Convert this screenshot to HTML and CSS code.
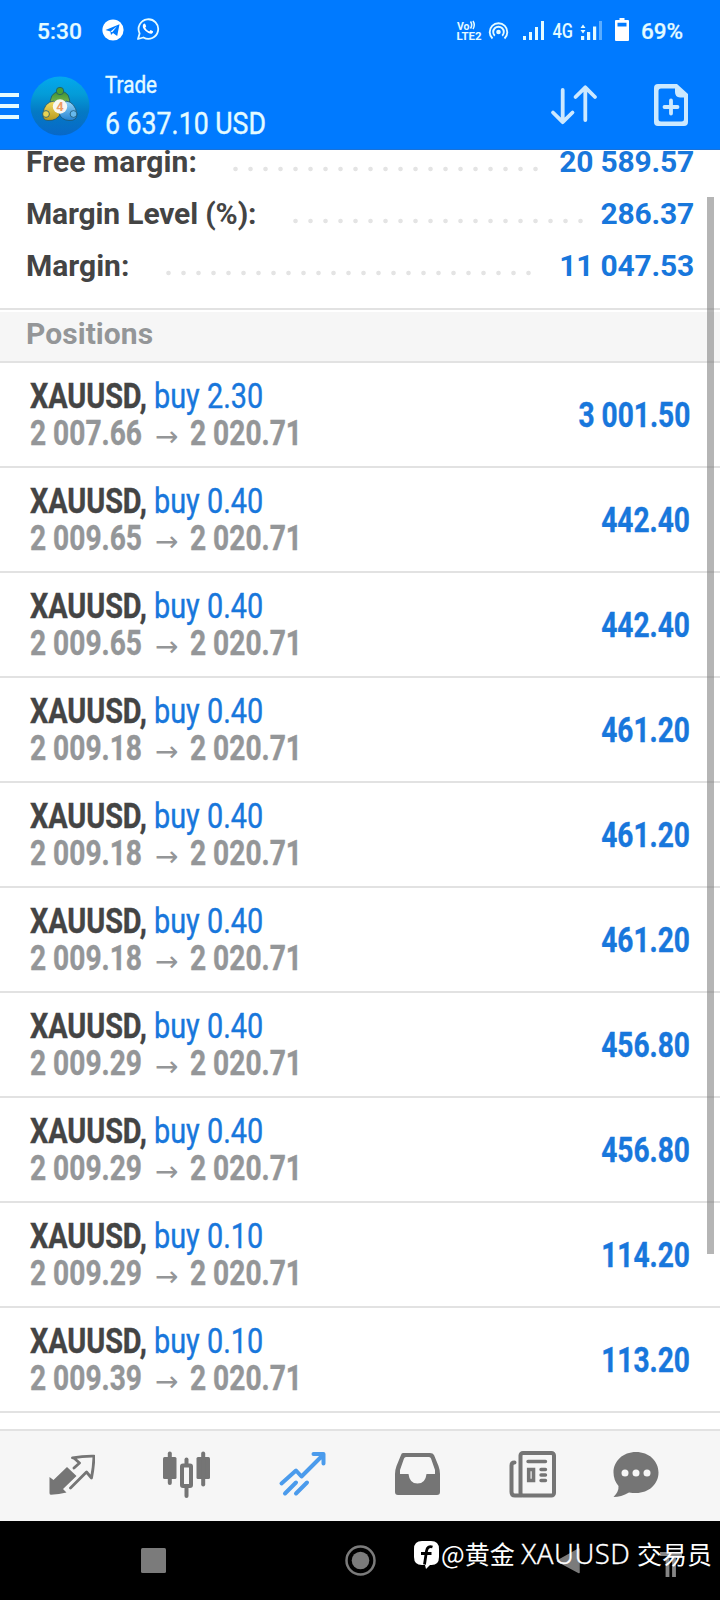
FILE: index.html
```
<!DOCTYPE html>
<html lang="en">
<head>
<meta charset="utf-8">
<title>Trade</title>
<link rel="stylesheet" href="styles.css">
</head>
<body>
<div class="screen">
  <header class="header">
    <div class="status">
      <span class="clock">5:30</span>
      <svg class="telegram" width="22" height="22" viewBox="0 0 22 22"><circle cx="11" cy="11" r="10.6" fill="#fff"/><path d="M3.5 11 17.5 5.2 15.2 17 11 14 9 16 8.4 12.5Z" fill="#007aff"/><path d="M8.6 12.4 15 7.3 10.2 13.2" fill="#fff"/></svg>
      <svg class="whatsapp" width="24" height="24" viewBox="0 0 24 24"><path d="M2 22 3.6 16.4A9.8 9.8 0 1 1 7.4 20.5Z" fill="none" stroke="#e4fbff" stroke-width="1.8" stroke-linejoin="round"/><path d="M7.3 7.2Q8.5 5.8 9.2 7L10.2 9.2 9.2 10.7Q10.5 13.3 13.3 14.5L14.6 13.1 17 14.3Q17.6 15 16 16.5 13.4 17.5 9.6 14.1 5.5 10 7.3 7.2Z" fill="#fff"/></svg>
      <svg class="indicators" width="146" height="26" viewBox="456 17 146 26" fill="#e4fbff" font-family="Roboto, sans-serif">
        <text x="457" y="28.500" font-size="11" font-weight="700" textLength="12.500" lengthAdjust="spacingAndGlyphs">Vo</text>
        <path d="M470.500 20.500q2.400 3.500 0 7M473 20q2.500 4 0 8" fill="none" stroke="#e4fbff" stroke-width="1.500"/>
        <text x="456.500" y="39" font-size="11" font-weight="700" textLength="25" lengthAdjust="spacingAndGlyphs">LTE2</text>
        <circle cx="498.500" cy="31" r="2.300"/>
        <path d="M492.500 37.500A8.800 8.800 0 1 1 504.500 37.500M494.800 34.800A5.300 5.300 0 1 1 502.200 34.800" fill="none" stroke="#e4fbff" stroke-width="1.900"/>
        <path d="M523 35h3v4h-3zM529 31h3v8h-3zM535 26h3v13h-3zM541 20h3v19h-3z"/>
        <text x="552.500" y="36.500" font-size="20" font-weight="500" textLength="20.500" lengthAdjust="spacingAndGlyphs">4G</text>
        <path d="M580.500 27 583 23.500 585.500 27ZM580.500 29 583 32.500 585.500 29ZM581 35h3.200v4H581zM587 31h3.200v8H587zM593 25.500h3.200V39H593z"/>
        <path d="M599 20h3v19h-3z" opacity=".4"/>
      </svg>
      <svg class="battery" width="14" height="24" viewBox="0 0 14 24"><path fill="#fff" fill-rule="evenodd" d="M4.500 0h5v2H13q1 0 1 1v19q0 1-1 1H1q-1 0-1-1V3q0-1 1-1h3.500ZM2.500 4.700v3.800h9V4.700Z"/></svg>
      <span class="percent">69%</span>
    </div>
    <div class="toolbar">
      <span class="menu"><i></i><i></i><i></i></span>
      <svg class="logo" width="60" height="60" viewBox="0 0 60 60">
        <defs>
          <linearGradient id="sky" x1="0" y1="0" x2="0" y2="1"><stop offset="0" stop-color="#03a9ee"/><stop offset=".3" stop-color="#049cd8"/><stop offset=".6" stop-color="#0479c4"/><stop offset="1" stop-color="#0868c8"/></linearGradient>
          <linearGradient id="gr" x1="0" y1="0" x2="0" y2="1"><stop offset="0" stop-color="#3c8f32"/><stop offset="1" stop-color="#9ed15f"/></linearGradient>
          <linearGradient id="ye" x1="0" y1="0" x2="0" y2="1"><stop offset="0" stop-color="#f1dc62"/><stop offset="1" stop-color="#b99a1c"/></linearGradient>
          <linearGradient id="bl" x1="0" y1="0" x2="0" y2="1"><stop offset="0" stop-color="#94d6fa"/><stop offset="1" stop-color="#2583d2"/></linearGradient>
        </defs>
        <circle cx="30" cy="30" r="29.500" fill="url(#sky)"/>
        <g stroke="#1c5570" stroke-width=".8">
          <path d="M20.500 31Q18.500 16 30 15.500T39.500 31Q34 35 30 34 24 34 20.500 31Z" fill="url(#gr)"/>
          <path d="M13 38Q14 26 24 25L31 37Q27 45 18 44.500 12 44 13 38Z" fill="url(#ye)"/>
          <path d="M36 25Q45 26 47 38 47 45 39 44.500 31 44 29 37Z" fill="url(#bl)"/>
          <circle cx="30" cy="15" r="3.700" fill="#4ca033"/><circle cx="16" cy="38" r="3.400" fill="#ead353"/><circle cx="43.500" cy="38" r="3.400" fill="#66b9ed"/>
        </g>
        <circle cx="30" cy="30.500" r="7.200" fill="#f7f7f2"/>
        <text x="30" y="34.800" text-anchor="middle" font-family="Roboto, sans-serif" font-size="13" font-weight="700" fill="#ee9c62">4</text>
      </svg>
      <div class="account"><div class="title">Trade</div><div class="balance">6 637.10 USD</div></div>
      <svg class="sort" width="48" height="42" viewBox="0 0 48 42" fill="none" stroke="#cce9ff" stroke-width="3.800" stroke-linecap="round" stroke-linejoin="round"><path d="M12.700 6V38M3 28.500 12.700 38.200 22.500 28.500M35.300 36V3.500M25.500 13 35.300 3.300 45 13"/></svg>
      <svg class="add" width="34" height="42" viewBox="0 0 34 42"><path fill="#cce9ff" fill-rule="evenodd" d="M4 0H23L34 10V38Q34 42 30 42H4Q0 42 0 38V4Q0 0 4 0ZM7 4.500Q4.500 4.500 4.500 7V35Q4.500 37.500 7 37.500H27.500Q30 37.500 30 35V13.500H26Q21 13 21 8V4.500Z"/><path d="M10.500 23h13M17 16.500v13" stroke="#cce9ff" stroke-width="3.800" stroke-linecap="round"/></svg>
    </div>
  </header>

  <main class="content">
    <section class="summary">
      <div class="line"><span class="label label-free">Free margin:</span><span class="dots dots-free"></span><span class="sum">20 589.57</span></div>
      <div class="line"><span class="label label-level">Margin Level (%):</span><span class="dots dots-level"></span><span class="sum">286.37</span></div>
      <div class="line"><span class="label label-margin">Margin:</span><span class="dots dots-margin"></span><span class="sum">11 047.53</span></div>
    </section>
    <h2 class="section-title">Positions</h2>
    <section class="positions">
      <div class="row"><div class="info"><div class="deal"><b>XAUUSD,</b> buy 2.30</div><div class="prices"><span class="open">2 007.66</span><span class="arrow">→</span><span class="now">2 020.71</span></div></div><span class="profit">3 001.50</span></div>
      <div class="row"><div class="info"><div class="deal"><b>XAUUSD,</b> buy 0.40</div><div class="prices"><span class="open">2 009.65</span><span class="arrow">→</span><span class="now">2 020.71</span></div></div><span class="profit">442.40</span></div>
      <div class="row"><div class="info"><div class="deal"><b>XAUUSD,</b> buy 0.40</div><div class="prices"><span class="open">2 009.65</span><span class="arrow">→</span><span class="now">2 020.71</span></div></div><span class="profit">442.40</span></div>
      <div class="row"><div class="info"><div class="deal"><b>XAUUSD,</b> buy 0.40</div><div class="prices"><span class="open">2 009.18</span><span class="arrow">→</span><span class="now">2 020.71</span></div></div><span class="profit">461.20</span></div>
      <div class="row"><div class="info"><div class="deal"><b>XAUUSD,</b> buy 0.40</div><div class="prices"><span class="open">2 009.18</span><span class="arrow">→</span><span class="now">2 020.71</span></div></div><span class="profit">461.20</span></div>
      <div class="row"><div class="info"><div class="deal"><b>XAUUSD,</b> buy 0.40</div><div class="prices"><span class="open">2 009.18</span><span class="arrow">→</span><span class="now">2 020.71</span></div></div><span class="profit">461.20</span></div>
      <div class="row"><div class="info"><div class="deal"><b>XAUUSD,</b> buy 0.40</div><div class="prices"><span class="open">2 009.29</span><span class="arrow">→</span><span class="now">2 020.71</span></div></div><span class="profit">456.80</span></div>
      <div class="row"><div class="info"><div class="deal"><b>XAUUSD,</b> buy 0.40</div><div class="prices"><span class="open">2 009.29</span><span class="arrow">→</span><span class="now">2 020.71</span></div></div><span class="profit">456.80</span></div>
      <div class="row"><div class="info"><div class="deal"><b>XAUUSD,</b> buy 0.10</div><div class="prices"><span class="open">2 009.29</span><span class="arrow">→</span><span class="now">2 020.71</span></div></div><span class="profit">114.20</span></div>
      <div class="row"><div class="info"><div class="deal"><b>XAUUSD,</b> buy 0.10</div><div class="prices"><span class="open">2 009.39</span><span class="arrow">→</span><span class="now">2 020.71</span></div></div><span class="profit">113.20</span></div>
    </section>
    <div class="scrollbar"></div>
  </main>

  <nav class="tabs">
    <svg width="48" height="48" viewBox="0 0 48 48"><path fill="#757575" d="M2.500 26 6.500 29 20 16 29.500 25 16 38 19.500 41.500Q12 43.500 4 43.800 2.500 44 2.500 42Z"/><path d="M27 17 32.500 12 27.500 7.500 25.500 6.800Q36 5 47 5.200 46.500 17 44.500 27L39.500 21 23.500 37" fill="none" stroke="#f6f6f6" stroke-width="6"/><path d="M27 17 32.500 12 27.500 7.500 25.500 6.800Q36 5 47 5.200 46.500 17 44.500 27L39.500 21 23.500 37" fill="none" stroke="#757575" stroke-width="2.800" stroke-linejoin="round" stroke-linecap="round"/></svg>
    <svg width="48" height="48" viewBox="-1 0 48 48" fill="#757575"><rect y="6" x="0" width="13.500" height="22" rx="1.500"/><rect x="4.800" y="0.500" width="4" height="33.500" rx="2"/><rect x="33.500" y="6" width="13.500" height="22" rx="1.500"/><rect x="38.200" y="0.500" width="4" height="35" rx="2"/><rect x="21.500" y="6.500" width="4" height="8" rx="2"/><rect x="21.500" y="34" width="4" height="13" rx="2"/><rect x="19" y="14.500" width="9" height="20.500" rx="1" fill="none" stroke="#757575" stroke-width="4"/></svg>
    <svg width="48" height="48" viewBox="0 0 48 48" fill="none" stroke="#4b9bec" stroke-width="4" stroke-linecap="round" stroke-linejoin="round"><path d="M3.500 32.500 18 19.500 23.500 25.500 45 4M35.500 3H45.500V12.500M7 42.500 18 31.500M18 42.500 29 31.500"/></svg>
    <svg width="48" height="48" viewBox="0 0 48 48"><path fill="#757575" fill-rule="evenodd" d="M10 2H37Q40 2 41 4L45.500 15Q47 19 47 23V41Q47 44 44 44H5Q2 44 2 41V23Q2 19 3.500 15L8 4Q8.500 2 10 2ZM13 6Q11.500 6 11 7.500L7 19V23H15.500Q16.500 32.500 24.500 32.500T33.500 23H42V19L38 7.500Q37.500 6 36 6Z"/></svg>
    <svg width="48" height="48" viewBox="0 0 48 48" fill="none" stroke="#757575" stroke-width="4" stroke-linecap="round" stroke-linejoin="round"><rect x="12.500" y="2" width="33.500" height="42.500" rx="2.500"/><path d="M6.500 11.500Q3.500 11.500 3.500 14.500V41Q3.500 44.500 7 44.500H13"/><path d="M20 10.500H37.500M33 18.500H37.500M33 24H37.500M33 29.500H37.500" stroke-width="3.400"/><path d="M20.700 18.500H25.500V29.500H20.700Z" stroke-width="3.600" stroke-linejoin="miter"/></svg>
    <svg class="chat" width="48" height="48" viewBox="0 0 48 48"><path fill="#757575" d="M24 1C37 1 46.500 10 46.500 21.500S37 42 24 42Q20.500 42 17 41.500 9 46 1.500 46 7 40.500 6.500 35 1.500 29 1.500 21.500C1.500 10 11 1 24 1Z"/><g fill="#f6f6f6"><circle cx="13" cy="22" r="3.500"/><circle cx="24" cy="22" r="3.500"/><circle cx="35" cy="22" r="3.500"/></g></svg>
  </nav>

  <footer class="system">
    <svg class="keys" width="720" height="79" viewBox="0 1521 720 79">
      <rect x="141" y="1548" width="25" height="25" rx="1.500" fill="#7b7b7b"/>
      <circle cx="360.500" cy="1560.500" r="14" fill="none" stroke="#7b7b7b" stroke-width="2.500"/><circle cx="360.500" cy="1560.500" r="8.800" fill="#7b7b7b"/>
      <path d="M557.500 1561 579 1549V1572.500Z" fill="#7b7b7b" stroke="#7b7b7b" stroke-width="1.500" stroke-linejoin="round"/>
      <path d="M660 1554h22M667.500 1558v19M674 1558v19" stroke="#858585" stroke-width="3.800"/>
    </svg>
    <div class="watermark">
      <svg width="25" height="29" viewBox="0 0 25 29"><path d="M8 0H17Q25 0 25 8V16Q25 24 17.500 24H16L12 28 11 24H8Q0 24 0 16V8Q0 0 8 0Z" fill="#fff"/><path d="M18.500 6Q13.500 4.500 12.500 10L10.500 23.500M7 12.500H17.500" fill="none" stroke="#000" stroke-width="2.800"/></svg>
      <span class="handle">@黄金 <span class="latin">XAUUSD</span> 交易员</span>
    </div>
  </footer>
</div>
</body>
</html>
```
FILE: styles.css
```
* { box-sizing: border-box; }
body { margin: 0; font-family: Roboto, "Liberation Sans", sans-serif; background: #fff; }
.screen { width: 720px; height: 1600px; display: flex; flex-direction: column; overflow: hidden; }

.header { flex: none; height: 150px; background: #007aff; border-bottom: 1px solid #1a72d8; color: #e4fbff; position: relative; z-index: 1; }
.status { height: 62px; display: flex; align-items: center; padding-left: 37px; }
.clock { width: 65px; font-size: 22.800px; font-weight: 500; -webkit-text-stroke: .2px; }
.telegram { margin-right: 12px; margin-top: -3px; }
.whatsapp { margin-top: -4px; }
.indicators { margin-left: 296px; margin-top: -1px; }
.battery { margin-left: 13px; margin-top: -2px; }
.percent { margin-left: 12px; font-size: 22.500px; font-weight: 500; -webkit-text-stroke: .2px; }
.toolbar { height: 87px; display: flex; align-items: center; }
.menu { width: 19px; display: grid; gap: 7px; margin-top: 1px; }
.menu i { height: 4px; background: #e4fbff; }
.logo { margin-left: 11px; }
.account { margin-left: 15px; width: 361px; height: 76px; white-space: nowrap; }
.title, .balance { transform: scaleX(.834); transform-origin: left; -webkit-text-stroke: .4px; }
.title { font-size: 24.800px; line-height: 34px; }
.balance { font-size: 32px; line-height: 42px; }
.sort { margin-left: 84px; margin-top: -1px; }
.add { margin-left: 56px; margin-top: -1px; }

.content { flex: 1; min-height: 0; position: relative; overflow: hidden; }
.summary { margin-top: -15px; height: 173px; padding: 0 26px; }
.line { height: 52px; display: flex; align-items: center; font-size: 30px; font-weight: 700; color: #444; }
.label, .sum { white-space: nowrap; }
.label-free { width: 202px; letter-spacing: .1px; }
.label-level { width: 262px; letter-spacing: -.15px; }
.label-margin { width: 135px; }
.dots { height: 6px; margin-top: 16px; background: radial-gradient(circle at center, #e4e4e4 0 1.800px, transparent 2.700px) 0 0 / 15px 6px repeat-x; }
.dots-free { width: 315px; }
.dots-level { width: 300px; }
.dots-margin { width: 375px; }
.sum { margin-left: auto; color: #1877dc; letter-spacing: -.2px; }
.section-title { margin: 0; height: 55px; padding: 0 26px; border-top: 2px solid #e2e2e2; border-bottom: 2px solid #e2e2e2; background: #f6f6f6; box-shadow: inset 0 2px #fff; color: #949698; font-size: 30px; font-weight: 700; line-height: 48px; letter-spacing: .05px; }
.row { height: 105px; display: flex; justify-content: space-between; align-items: flex-start; border-bottom: 2px solid #e2e2e2; padding: 14px 30px 0; }
.info { white-space: nowrap; }
.deal { font-size: 34.500px; line-height: 38px; color: #1877dc; transform: scaleX(.836); transform-origin: left; -webkit-text-stroke: .4px; }
.deal b { color: #444; font-weight: 700; letter-spacing: -.1px; }
.prices { display: flex; font-size: 34.500px; line-height: 36px; font-weight: 700; color: #949698; }
.open, .now { transform: scaleX(.815); transform-origin: left; -webkit-text-stroke: .4px; }
.open { width: 125px; }
.arrow { width: 35px; padding-top: 4px; font-family: "DejaVu Sans", sans-serif; font-size: 28px; line-height: 36px; font-weight: 400; height: 36px; }
.profit { margin-top: 19px; font-size: 34.500px; line-height: 38px; font-weight: 700; color: #1877dc; transform: scaleX(.815); transform-origin: right; -webkit-text-stroke: .4px; }
.scrollbar { position: absolute; top: 47px; right: 6px; width: 7px; height: 1057px; background: rgba(120, 120, 120, .55); }

.tabs { flex: none; height: 92px; border-top: 2px solid #e2e2e2; background: #f6f6f6; display: flex; gap: 67.200px; padding: 20px 47.300px 0; }
.tabs svg { flex: none; }
.tabs .chat { margin-left: -11px; }
.system { flex: none; height: 79px; background: #000; position: relative; }
.keys { display: block; }
.watermark { position: absolute; left: 414px; top: 12px; display: flex; align-items: center; color: #fff; white-space: nowrap; }
.watermark svg { margin-top: 4px; }
.handle { font-family: "Noto Sans CJK SC", sans-serif; font-size: 25px; line-height: 40px; margin-left: 2px; }
.latin { font-family: "Noto Sans", sans-serif; font-weight: 300; font-size: 27.500px; letter-spacing: .5px; margin: 0 1px; -webkit-text-stroke: .3px; }
```
